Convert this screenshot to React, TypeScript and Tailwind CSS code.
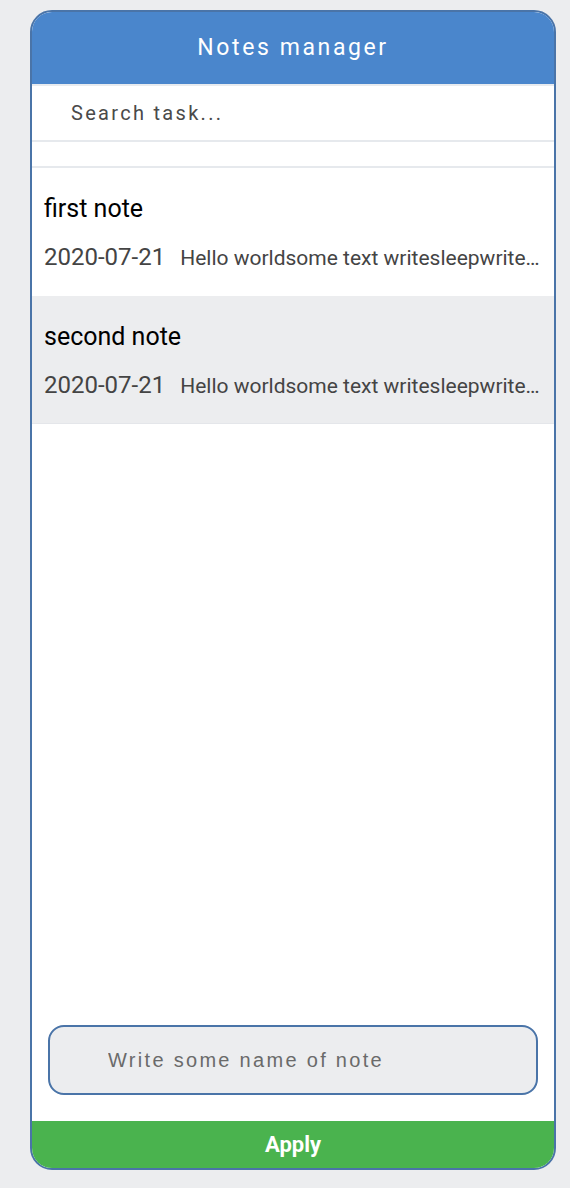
import React from "react";

const notes = [
  { title: "first note", date: "2020-07-21", text: "Hello worldsome text writesleepwrite…", bg: "bg-white" },
  { title: "second note", date: "2020-07-21", text: "Hello worldsome text writesleepwrite…", bg: "bg-[#ecedef]" },
];

export default function App() {
  return (
    <div className="min-h-[1188px] w-[570px] bg-[#ecedef] pt-[10px] pl-[30px]" style={{ fontFamily: "Roboto, 'Liberation Sans', sans-serif" }}>
      <div className="flex h-[1160px] w-[526px] flex-col overflow-hidden rounded-[22px] border-2 border-[#4a74a8] bg-white">
        <div className="flex h-[72px] shrink-0 items-center justify-center bg-[#4a86cc] text-[23px] tracking-[2.6px] text-white">
          Notes manager
        </div>
        <div className="h-[2px] shrink-0 bg-[#e8ebef]" />
        <input
          className="h-[56px] shrink-0 border-b-2 border-[#e6e9ed] bg-white pl-[39px] text-[20px] tracking-[2.3px] text-[#333] outline-none placeholder:text-[#4a4a4a]"
          placeholder="Search task..."
        />
        <div className="h-[26px] shrink-0 border-b-2 border-[#e6e9ed]" />
        <div className="flex flex-col">
          {notes.map((n, i) => (
            <div key={i} className={`flex h-[128px] flex-col pl-[12px] pr-[8px] pt-[26px] ${n.bg} ${i === notes.length - 1 ? "border-b border-[#e4e6ea]" : ""}`}>
              <div className="text-[25px] leading-[30px] text-black">{n.title}</div>
              <div className="mt-[15px] flex items-baseline gap-[15px] whitespace-nowrap">
                <span className="shrink-0 text-[24px] text-[#444]">{n.date}</span>
                <span className="text-[21px] text-[#444]">{n.text}</span>
              </div>
            </div>
          ))}
        </div>
        <div className="flex-1" />
        <div className="px-[16px] pb-[26px]">
          <input
            className="h-[70px] w-full rounded-[16px] border-2 border-[#4a74a8] bg-[#ecedef] pl-[58px] text-[20px] tracking-[2.3px] text-[#333] outline-none placeholder:text-[#6a6a6a]"
            style={{ fontFamily: "'Liberation Sans', Arial, sans-serif" }}
            placeholder="Write some name of note"
          />
        </div>
        <button className="h-[47px] shrink-0 bg-[#4ab34e] text-[22px] font-bold text-white">
          Apply
        </button>
      </div>
    </div>
  );
}
